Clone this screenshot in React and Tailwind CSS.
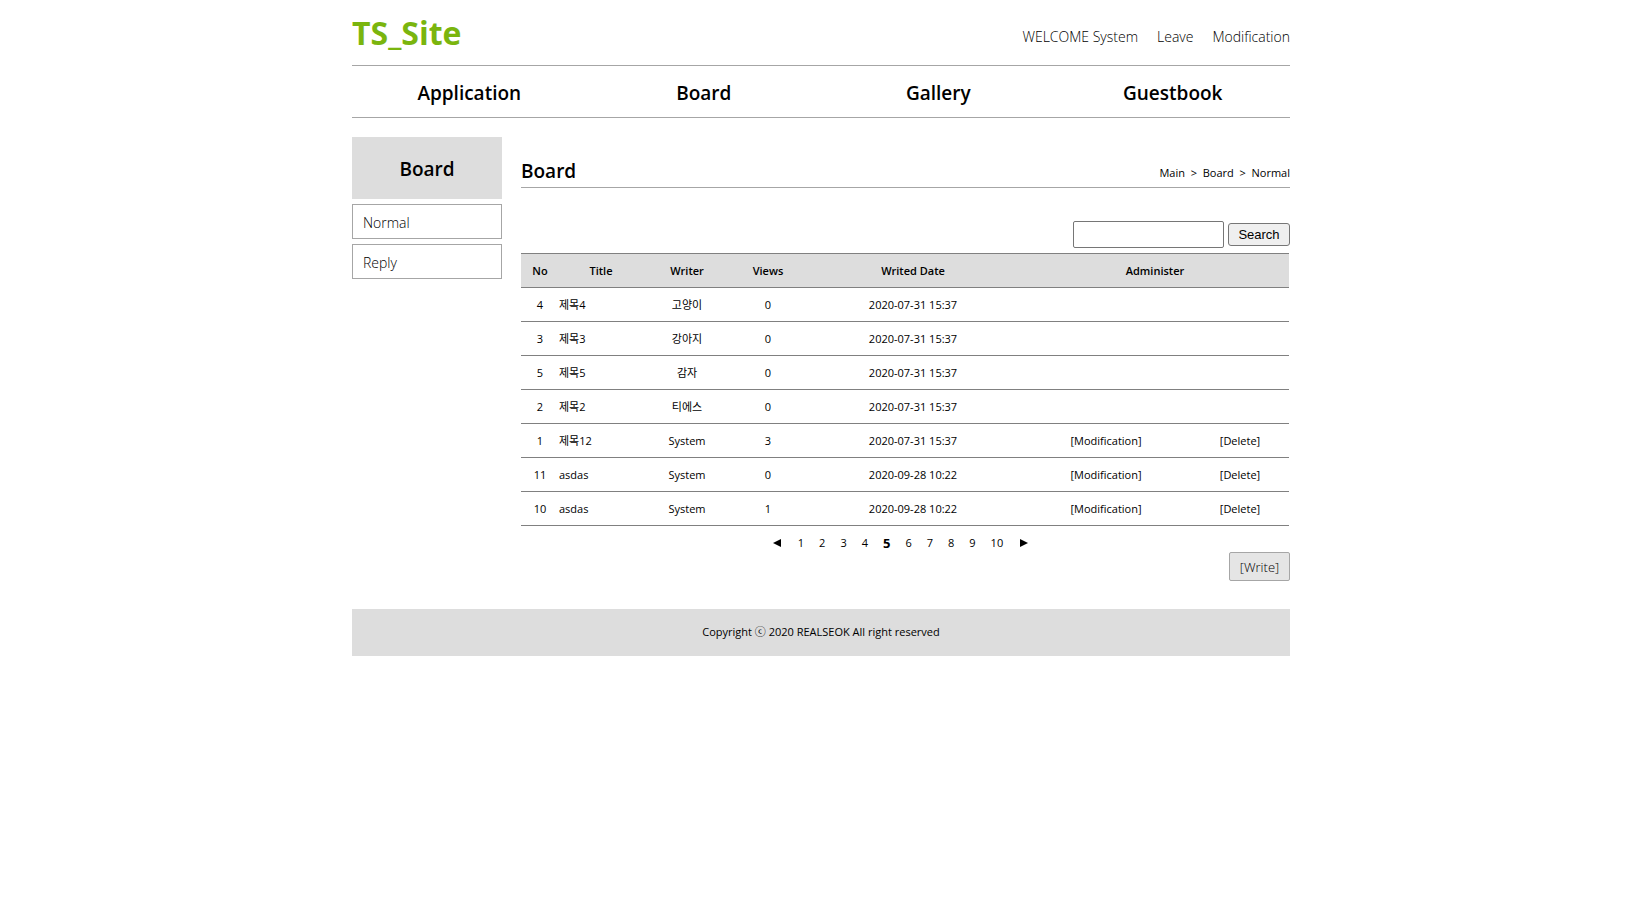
const sections = ["Application", "Board", "Gallery", "Guestbook"];
const account = ["WELCOME System", "Leave", "Modification"];
const boards = ["Normal", "Reply"];
const pages = [1, 2, 3, 4, 5, 6, 7, 8, 9, 10];
const currentPage = 5;

const posts = [
  { no: 4, title: "제목4", writer: "고양이", views: 0, date: "2020-07-31 15:37" },
  { no: 3, title: "제목3", writer: "강아지", views: 0, date: "2020-07-31 15:37" },
  { no: 5, title: "제목5", writer: "감자", views: 0, date: "2020-07-31 15:37" },
  { no: 2, title: "제목2", writer: "티에스", views: 0, date: "2020-07-31 15:37" },
  { no: 1, title: "제목12", writer: "System", views: 3, date: "2020-07-31 15:37", own: true },
  { no: 11, title: "asdas", writer: "System", views: 0, date: "2020-09-28 10:22", own: true },
  { no: 10, title: "asdas", writer: "System", views: 1, date: "2020-09-28 10:22", own: true },
];

function Header() {
  return (
    <header>
      <div className="flex h-[65px] items-center justify-between">
        <a href="#" className="text-[32px] leading-none font-bold text-[#7ab50e]">
          TS_Site
        </a>
        <ul className="flex gap-[19px] pt-2 text-sm font-[350]">
          {account.map((item, i) => (
            <li key={item}>{i === 0 ? item : <a href="#">{item}</a>}</li>
          ))}
        </ul>
      </div>
      <nav className="border-y border-[#a6a6a6]">
        <ul className="grid h-[51px] grid-cols-4 items-center pt-1 text-center text-[19px] font-semibold">
          {sections.map((item) => (
            <li key={item}>
              <a href="#">{item}</a>
            </li>
          ))}
        </ul>
      </nav>
    </header>
  );
}

function Sidebar() {
  return (
    <aside className="flex w-[150px] shrink-0 flex-col gap-[5px]">
      <h2 className="flex h-[62px] items-center justify-center bg-[#dddddd] pt-0.5 text-[19px] font-semibold">
        Board
      </h2>
      {boards.map((item) => (
        <a
          key={item}
          href="#"
          className="flex h-[35px] items-center border border-[#a6a6a6] px-2.5 pt-0.5 text-sm font-[350]"
        >
          {item}
        </a>
      ))}
    </aside>
  );
}

function PostTable() {
  return (
    <div className="pr-px">
      <table className="w-full table-fixed border-collapse text-center text-[11px]">
        <colgroup>
          <col className="w-[38px]" />
          <col className="w-[84px]" />
          <col className="w-[88px]" />
          <col className="w-[74px]" />
          <col className="w-[216px]" />
          <col className="w-[170px]" />
          <col className="w-[98px]" />
        </colgroup>
        <thead>
          <tr className="h-[34px] border-y border-[#808080] bg-[#dddddd] *:pt-0.5 *:font-semibold">
            <th>No</th>
            <th>Title</th>
            <th>Writer</th>
            <th>Views</th>
            <th>Writed Date</th>
            <th colSpan={2}>Administer</th>
          </tr>
        </thead>
        <tbody>
          {posts.map((post) => (
            <tr key={post.no} className="h-[34px] border-b border-[#808080] *:pt-0.5">
              <td>{post.no}</td>
              <td className="text-left">
                <a href="#">{post.title}</a>
              </td>
              <td>{post.writer}</td>
              <td>{post.views}</td>
              <td>{post.date}</td>
              <td>{post.own && <a href="#">[Modification]</a>}</td>
              <td>{post.own && <a href="#">[Delete]</a>}</td>
            </tr>
          ))}
        </tbody>
      </table>
    </div>
  );
}

function Pagination() {
  return (
    <nav
      aria-label="Pages"
      className="flex h-[26px] items-center justify-center gap-[15px] pt-2 pr-2.5 text-[11px]"
    >
      <a href="#" aria-label="Previous" className="pr-0.5">
        <svg viewBox="0 0 8 8" className="size-2">
          <path d="M8 0v8L0 4z" />
        </svg>
      </a>
      {pages.map((page) => (
        <a
          key={page}
          href="#"
          aria-current={page === currentPage ? "page" : undefined}
          className="aria-[current=page]:pt-0.5 aria-[current=page]:text-[13px] aria-[current=page]:font-bold"
        >
          {page}
        </a>
      ))}
      <a href="#" aria-label="Next" className="pl-0.5">
        <svg viewBox="0 0 8 8" className="size-2">
          <path d="M0 0v8l8-4z" />
        </svg>
      </a>
    </nav>
  );
}

export default function App() {
  return (
    <div className="mx-auto w-full max-w-[938px] bg-white font-['Open_Sans','Noto_Sans_CJK_KR',sans-serif] text-black">
      <Header />
      <div className="flex gap-[19px] pt-[19px]">
        <Sidebar />
        <main className="min-w-0 flex-1">
          <div className="flex h-[51px] items-end justify-between border-b border-[#a6a6a6] pb-1">
            <h1 className="text-[19px] leading-6 font-semibold">Board</h1>
            <p className="text-[11px] leading-5">
              <a href="#">Main</a>&nbsp; &gt; &nbsp;<a href="#">Board</a>&nbsp; &gt; &nbsp;
              <a href="#">Normal</a>
            </p>
          </div>
          <form className="flex items-center justify-end gap-1 pt-[33px] pb-[5px]">
            <input
              type="text"
              aria-label="Search posts"
              className="h-[27px] w-[151px] rounded-xs border border-[#767676] bg-white px-1 text-sm"
            />
            <button
              type="button"
              className="h-[23px] w-[62px] rounded-[3px] border border-[#767676] bg-[#efefef] font-['Liberation_Sans',sans-serif] text-[13px] leading-none"
            >
              Search
            </button>
          </form>
          <PostTable />
          <Pagination />
          <div className="flex justify-end">
            <button
              type="button"
              className="h-[29px] w-[61px] rounded-xs border border-[#a6a6a6] bg-[#e5e5e5] pt-0.5 text-[13px] font-[350]"
            >
              [Write]
            </button>
          </div>
        </main>
      </div>
      <footer className="mt-7 flex h-[47px] items-center justify-center bg-[#dddddd] text-[11px]">
        Copyright ⓒ 2020 REALSEOK All right reserved
      </footer>
    </div>
  );
}
